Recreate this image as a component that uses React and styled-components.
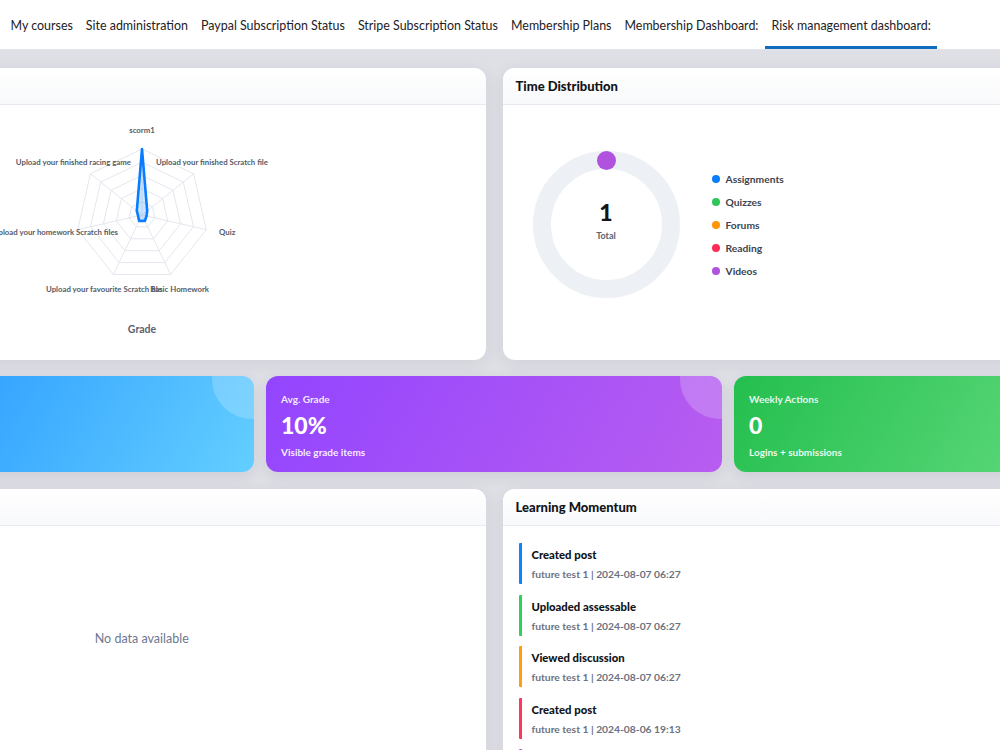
import React from "react";
import styled, { createGlobalStyle } from "styled-components";

const Global = createGlobalStyle`
  html, body { margin: 0; padding: 0; }
  body { font-family: Lato, "Open Sans", sans-serif; background: #dfe0e6; overflow: hidden; }
  * { box-sizing: border-box; }
`;

const Page = styled.div`
  min-height: 750px;
  background: #dfe0e6;
  overflow: hidden;
`;

const Nav = styled.nav`
  background: #fff;
  height: 50px;
  border-bottom: 1px solid #e4e5ea;
  display: flex;
  align-items: stretch;
  padding-left: 4px;
`;

const NavLink = styled.a`
  display: flex;
  align-items: center;
  padding: 5px 6.5px 0;
  font-size: 12.45px;
  color: #1d2125;
  text-decoration: none;
  white-space: nowrap;
  border-bottom: 3px solid ${(p) => (p.$active ? "#0f6cbf" : "transparent")};
`;

const Main = styled.main`
  padding-top: 18px;
  overflow: hidden;
`;

const Content = styled.div`
  width: 1392px;
  margin-left: -202px;
  display: flex;
  flex-direction: column;
`;

const TwoCol = styled.div`
  display: grid;
  grid-template-columns: 1fr 1fr;
  column-gap: 17px;
  margin-top: ${(p) => p.$mt || 0}px;
`;

const Card = styled.section`
  background: #fff;
  border-radius: 12px;
  height: ${(p) => p.$h}px;
  box-shadow: 0 4px 18px rgba(40, 44, 70, 0.08);
  overflow: hidden;
  display: flex;
  flex-direction: column;
`;

const CardHeader = styled.header`
  height: 37px;
  flex: none;
  display: flex;
  align-items: center;
  padding: 0 13px;
  border-bottom: 1px solid #e7eaf0;
  background: linear-gradient(180deg, #ffffff, #f8f9fb);
  font-size: 13px;
  font-weight: 900;
  color: #111418;
`;

const ChartBody = styled.div`
  flex: 1;
  display: flex;
  justify-content: center;
`;

const DistBody = styled.div`
  flex: 1;
  display: flex;
  align-items: center;
  gap: 32px;
  padding: 0 0 16px 30px;
`;

const DonutWrap = styled.div`
  position: relative;
  width: 147px;
  height: 147px;
  flex: none;
`;

const DonutCenter = styled.div`
  position: absolute;
  inset: 0;
  display: flex;
  flex-direction: column;
  align-items: center;
  justify-content: center;
  padding-bottom: 10px;
`;

const DonutValue = styled.div`
  font-size: 23px;
  font-weight: 900;
  color: #111418;
  line-height: 26px;
`;

const DonutLabel = styled.div`
  font-size: 9px;
  font-weight: 700;
  color: #5b6270;
  margin-top: 5px;
`;

const Legend = styled.ul`
  list-style: none;
  margin: 0;
  padding: 0;
  display: flex;
  flex-direction: column;
  gap: 7px;
`;

const LegendItem = styled.li`
  display: flex;
  align-items: center;
  gap: 6px;
  height: 16px;
  font-size: 10.3px;
  font-weight: 700;
  color: #3d4450;
`;

const Dot = styled.span`
  width: 8px;
  height: 8px;
  border-radius: 50%;
  background: ${(p) => p.$c};
`;

const Stats = styled.div`
  display: grid;
  grid-template-columns: repeat(3, 1fr);
  column-gap: 12px;
  margin-top: 16px;
`;

const StatCard = styled.div`
  position: relative;
  overflow: hidden;
  height: 96px;
  border-radius: 12px;
  padding: 15px;
  color: #fff;
  background: ${(p) => p.$bg};
  box-shadow: 0 4px 14px rgba(40, 44, 70, 0.1);
  &::after {
    content: "";
    position: absolute;
    width: 80px;
    height: 80px;
    border-radius: 50%;
    top: -37px;
    right: -38px;
    background: rgba(255, 255, 255, 0.2);
  }
`;

const StatLabel = styled.div`
  font-size: 10px;
  font-weight: 700;
  line-height: 16px;
  color: rgba(255, 255, 255, 0.9);
`;

const StatValue = styled.div`
  font-size: 23px;
  font-weight: 900;
  line-height: 28px;
  margin-top: 4px;
`;

const StatSub = styled.div`
  font-size: 10px;
  font-weight: 700;
  line-height: 16px;
  margin-top: 5px;
  color: rgba(255, 255, 255, 0.92);
`;

const Empty = styled.div`
  height: 224px;
  display: flex;
  align-items: center;
  justify-content: center;
  font-size: 12.5px;
  color: #6c7893;
`;

const Timeline = styled.div`
  padding: 17px 16px;
  display: flex;
  flex-direction: column;
  gap: 10.5px;
`;

const Event = styled.div`
  height: 41px;
  border-left: 3px solid ${(p) => p.$c};
  border-radius: 1px;
  padding: 4px 0 0 10px;
`;

const EventTitle = styled.div`
  font-size: 11.3px;
  font-weight: 900;
  line-height: 16px;
  color: #111418;
`;

const EventMeta = styled.div`
  font-size: 10.3px;
  font-weight: 700;
  line-height: 16px;
  margin-top: 3px;
  color: #6b7280;
`;

const navItems = [
  "My courses",
  "Site administration",
  "Paypal Subscription Status",
  "Stripe Subscription Status",
  "Membership Plans",
  "Membership Dashboard:",
  "Risk management dashboard:",
];

const CX = 200;
const CY = 110;
const R = 66;
const N = 7;
const pt = (k, v) => {
  const a = ((k * 360) / N - 90) * (Math.PI / 180);
  return [CX + Math.cos(a) * R * v, CY + Math.sin(a) * R * v];
};
const poly = (vals) => vals.map((v, k) => pt(k, v).map((n) => n.toFixed(1)).join(",")).join(" ");

function Radar() {
  const data = [1, 0.1, 0.07, 0.1, 0.1, 0.06, 0.1];
  const labelStyle = { fontSize: 7.8, fontWeight: 700, fill: "#555b66", fontFamily: "Lato, sans-serif" };
  return (
    <svg width="400" height="255" viewBox="0 0 400 255">
      {[0.2, 0.4, 0.6, 0.8, 1].map((l) => (
        <polygon key={l} points={poly(Array(N).fill(l))} fill="none" stroke="#e4e7ee" strokeWidth="1" />
      ))}
      {Array.from({ length: N }).map((_, k) => {
        const [x, y] = pt(k, 1);
        return <line key={k} x1={CX} y1={CY} x2={x} y2={y} stroke="#e4e7ee" strokeWidth="1" />;
      })}
      <polygon points={poly(data)} fill="rgba(10,124,255,0.2)" stroke="#0a7cff" strokeWidth="2.6" strokeLinejoin="round" />
      <text x="200" y="28" textAnchor="middle" style={labelStyle}>scorm1</text>
      <text x="189" y="60" textAnchor="end" style={labelStyle}>Upload your finished racing game</text>
      <text x="214" y="60" textAnchor="start" style={labelStyle}>Upload your finished Scratch file</text>
      <text x="277" y="130" textAnchor="start" style={labelStyle}>Quiz</text>
      <text x="176" y="130" textAnchor="end" style={labelStyle}>Upload your homework Scratch files</text>
      <text x="104" y="187" textAnchor="start" style={labelStyle}>Upload your favourite Scratch file</text>
      <text x="267" y="187" textAnchor="end" style={labelStyle}>Basic Homework</text>
      <text x="200" y="228" textAnchor="middle" style={{ fontSize: 10.5, fontWeight: 700, fill: "#5b6270", fontFamily: "Lato, sans-serif" }}>Grade</text>
    </svg>
  );
}

const legend = [
  ["Assignments", "#0a7cff"],
  ["Quizzes", "#2fc55a"],
  ["Forums", "#ff9500"],
  ["Reading", "#ff2d55"],
  ["Videos", "#af52de"],
];

const events = [
  ["Created post", "future test 1 | 2024-08-07 06:27", "#0a84ff"],
  ["Uploaded assessable", "future test 1 | 2024-08-07 06:27", "#30d158"],
  ["Viewed discussion", "future test 1 | 2024-08-07 06:27", "#ff9f0a"],
  ["Created post", "future test 1 | 2024-08-06 19:13", "#ff375f"],
  ["Viewed course", "future test 1 | 2024-08-06 19:12", "#bf5af2"],
];

export default function App() {
  return (
    <Page>
      <Global />
      <Nav>
        {navItems.map((n, i) => (
          <NavLink key={n} href="#" $active={i === navItems.length - 1}>
            {n}
          </NavLink>
        ))}
      </Nav>
      <Main>
        <Content>
          <TwoCol>
            <Card $h={292}>
              <CardHeader>Performance Radar</CardHeader>
              <ChartBody>
                <Radar />
              </ChartBody>
            </Card>
            <Card $h={292}>
              <CardHeader>Time Distribution</CardHeader>
              <DistBody>
                <DonutWrap>
                  <svg width="147" height="147" viewBox="0 0 147 147">
                    <circle cx="73.5" cy="73.5" r="64.5" fill="none" stroke="#edf1f5" strokeWidth="18" />
                    <circle cx="73.5" cy="9.5" r="9.5" fill="#b052de" />
                  </svg>
                  <DonutCenter>
                    <DonutValue>1</DonutValue>
                    <DonutLabel>Total</DonutLabel>
                  </DonutCenter>
                </DonutWrap>
                <Legend>
                  {legend.map(([l, c]) => (
                    <LegendItem key={l}>
                      <Dot $c={c} />
                      {l}
                    </LegendItem>
                  ))}
                </Legend>
              </DistBody>
            </Card>
          </TwoCol>
          <Stats>
            <StatCard $bg="linear-gradient(120deg, #1a8bff 0%, #63ceff 100%)">
              <StatLabel>Course Progress</StatLabel>
              <StatValue>0%</StatValue>
              <StatSub>Completed activities</StatSub>
            </StatCard>
            <StatCard $bg="linear-gradient(120deg, #9345ff 0%, #b85df0 100%)">
              <StatLabel>Avg. Grade</StatLabel>
              <StatValue>10%</StatValue>
              <StatSub>Visible grade items</StatSub>
            </StatCard>
            <StatCard $bg="linear-gradient(120deg, #24bf4e 0%, #72e28c 100%)">
              <StatLabel>Weekly Actions</StatLabel>
              <StatValue>0</StatValue>
              <StatSub>Logins + submissions</StatSub>
            </StatCard>
          </Stats>
          <TwoCol $mt={17}>
            <Card $h={320}>
              <CardHeader>Activity Heatmap</CardHeader>
              <Empty>No data available</Empty>
            </Card>
            <Card $h={320}>
              <CardHeader>Learning Momentum</CardHeader>
              <Timeline>
                {events.map(([t, m, c], i) => (
                  <Event key={i} $c={c}>
                    <EventTitle>{t}</EventTitle>
                    <EventMeta>{m}</EventMeta>
                  </Event>
                ))}
              </Timeline>
            </Card>
          </TwoCol>
        </Content>
      </Main>
    </Page>
  );
}
